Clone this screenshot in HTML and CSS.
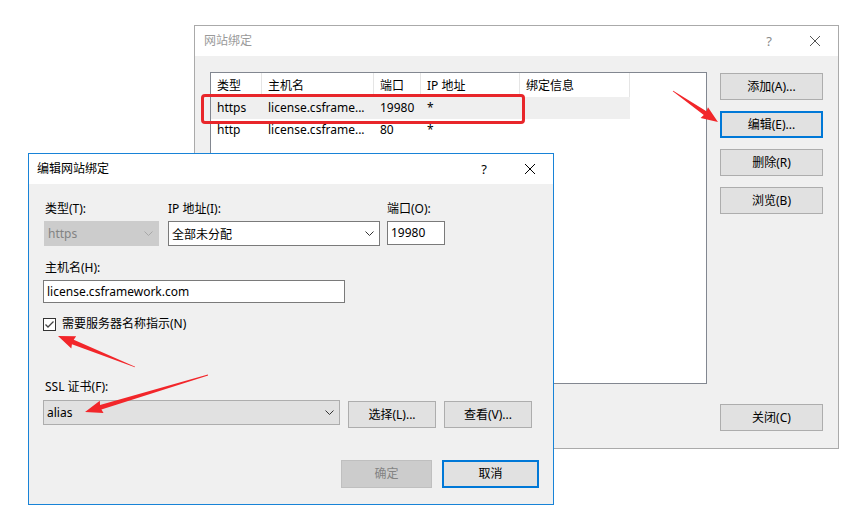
FILE: index.html
```html
<!DOCTYPE html>
<html>
<head>
<meta charset="utf-8">
<link rel="stylesheet" href="styles.css">
</head>
<body>
<div class="win win-back">
  <div class="titlebar">
    <div class="title">网站绑定</div>
    <div class="tbtn q">?</div>
    <div class="tbtn"><svg width="12" height="12" viewBox="0 0 12 12"><path d="M1 1 L11 11 M11 1 L1 11" stroke="#555" stroke-width="1" fill="none"/></svg></div>
  </div>
  <div class="back-body">
    <div class="list">
      <div class="lrow lhead">
        <div class="cell">类型</div>
        <div class="cell">主机名</div>
        <div class="cell">端口</div>
        <div class="cell">IP 地址</div>
        <div class="cell">绑定信息</div>
      </div>
      <div class="lrow sel">
        <div class="cell">https</div>
        <div class="cell">license.csframe...</div>
        <div class="cell">19980</div>
        <div class="cell">*</div>
        <div class="cell"></div>
      </div>
      <div class="lrow">
        <div class="cell">http</div>
        <div class="cell">license.csframe...</div>
        <div class="cell">80</div>
        <div class="cell">*</div>
        <div class="cell"></div>
      </div>
    </div>
    <div class="side">
      <div class="btn side-btn">添加(A)...</div>
      <div class="btn side-btn focus">编辑(E)...</div>
      <div class="btn side-btn">删除(R)</div>
      <div class="btn side-btn">浏览(B)</div>
      <div class="btn side-btn close-btn">关闭(C)</div>
    </div>
  </div>
</div>

<div class="hl"></div>

<div class="win win-front">
  <div class="titlebar">
    <div class="title">编辑网站绑定</div>
    <div class="tbtn q qa">?</div>
    <div class="tbtn"><svg width="12" height="12" viewBox="0 0 12 12"><path d="M1 1 L11 11 M11 1 L1 11" stroke="#000" stroke-width="1" fill="none"/></svg></div>
  </div>
  <div class="front-body">
    <div class="row1">
      <div class="field f-type">
        <div class="lbl">类型(T):</div>
        <div class="combo disabled"><span class="ctext">https</span><span class="chev"><svg width="9" height="5" viewBox="0 0 9 5"><polyline points="0.5,0.5 4.5,4.5 8.5,0.5" fill="none" stroke="#a8a8a8" stroke-width="1"/></svg></span></div>
      </div>
      <div class="field f-ip">
        <div class="lbl">IP 地址(I):</div>
        <div class="combo white"><span class="ctext">全部未分配</span><span class="chev"><svg width="9" height="5" viewBox="0 0 9 5"><polyline points="0.5,0.5 4.5,4.5 8.5,0.5" fill="none" stroke="#333" stroke-width="1"/></svg></span></div>
      </div>
      <div class="field f-port">
        <div class="lbl">端口(O):</div>
        <div class="tinput port">19980</div>
      </div>
    </div>
    <div class="lbl host-lbl">主机名(H):</div>
    <div class="tinput host">license.csframework.com</div>
    <div class="chkrow">
      <span class="chk"><svg width="11" height="11" viewBox="0 0 11 11"><polyline points="1.5,5.5 4,8 9.5,2.5" fill="none" stroke="#444" stroke-width="1.3"/></svg></span>
      <span class="chklbl">需要服务器名称指示(N)</span>
    </div>
    <div class="lbl ssl-lbl">SSL 证书(F):</div>
    <div class="sslrow">
      <div class="combo gray ssl"><span class="ctext">alias</span><span class="chev"><svg width="9" height="5" viewBox="0 0 9 5"><polyline points="0.5,0.5 4.5,4.5 8.5,0.5" fill="none" stroke="#333" stroke-width="1"/></svg></span></div>
      <div class="btn sbtn">选择(L)...</div>
      <div class="btn sbtn">查看(V)...</div>
    </div>
    <div class="footer">
      <div class="btn fbtn disabled-btn">确定</div>
      <div class="btn fbtn focus cancel">取消</div>
    </div>
  </div>
</div>

<svg class="arrows" width="863" height="514" viewBox="0 0 863 514">
  <g fill="#f2262a">
    <polygon transform="translate(673,91) rotate(34.6)" points="0,-0.4 39,-2.3 38,-6.5 54.6,0 38,6.5 39,2.3 0,0.4"/>
    <polygon transform="translate(135,367) rotate(201.9)" points="0,-0.4 67,-2.4 66,-6.5 83,0 66,6.5 67,2.4 0,0.4"/>
    <polygon transform="translate(208,375) rotate(163.3)" points="0,-0.4 112,-2.4 111,-6.5 128.4,0 111,6.5 112,2.4 0,0.4"/>
  </g>
</svg>
</body>
</html>
```

FILE: styles.css
```css
* { box-sizing: border-box; }
html, body { margin: 0; padding: 0; }
body {
  width: 863px;
  height: 514px;
  background: #fff;
  position: relative;
  overflow: hidden;
  font-family: "Noto Sans", "Noto Sans CJK SC", sans-serif;
  font-size: 12px;
  color: #000;
}

.win {
  position: absolute;
  background: #f0f0f0;
  display: flex;
  flex-direction: column;
}
.win-back {
  left: 194px;
  top: 25px;
  width: 645px;
  height: 424px;
  border: 1px solid #aaaaaa;
}
.win-front {
  left: 28px;
  top: 153px;
  width: 526px;
  height: 352px;
  border: 1px solid #1883d7;
}

.titlebar {
  height: 30px;
  flex: none;
  background: #fff;
  display: flex;
  align-items: center;
}
.title {
  flex: 1;
  padding-left: 8px;
  line-height: 16px;
}
.win-back .title { color: #9a9a9a; padding-left: 9px; }
.tbtn {
  width: 46px;
  height: 30px;
  display: flex;
  align-items: center;
  justify-content: center;
}
.q { font-size: 13px; color: #8a8a8a; }
.qa { color: #000; }

/* back window */
.back-body {
  flex: 1;
  display: flex;
  padding: 16px 15px 17px 15px;
  gap: 13px;
}
.list {
  width: 497px;
  height: 312px;
  background: #fff;
  border: 1px solid #828790;
}
.lrow {
  display: grid;
  grid-template-columns: 51px 112px 47px 99px 110px;
  width: 419px;
  height: 22px;
  align-items: center;
}
.lhead { height: 24px; }
.lhead .cell { border-right: 1px solid #e5e5e5; height: 24px; line-height: 25px; }
.sel { background: #efefef; }
.cell {
  padding-left: 6px;
  white-space: nowrap;
  overflow: hidden;
  line-height: 22px;
}
.side {
  width: 103px;
  display: flex;
  flex-direction: column;
  gap: 11px;
  padding-top: 1px;
}
.btn {
  background: #e1e1e1;
  border: 1px solid #adadad;
  display: flex;
  align-items: center;
  justify-content: center;
  line-height: 16px;
}
.side-btn { height: 27px; }
.focus { border: 2px solid #0078d7; }
.close-btn { margin-top: auto; }

.hl {
  position: absolute;
  left: 201px;
  top: 94px;
  width: 324px;
  height: 30px;
  border: 3px solid #e8262a;
  border-radius: 4px;
}

/* front window */
.front-body {
  flex: 1;
  display: flex;
  flex-direction: column;
  padding: 17px 14px 0 15px;
}
.lbl { line-height: 16px; height: 16px; white-space: nowrap; }
.row1 { display: flex; align-items: flex-start; }
.field { display: flex; flex-direction: column; gap: 4px; }
.f-type { width: 115px; }
.f-type .lbl { padding-left: 1px; }
.f-ip { width: 212px; margin-left: 9px; }
.f-port { width: 58px; margin-left: 7px; }

.combo {
  height: 25px;
  display: flex;
  align-items: center;
  border: 1px solid #7a7a7a;
}
.combo .ctext { flex: 1; padding-left: 3px; white-space: nowrap; }
.combo .chev { width: 20px; display: flex; justify-content: center; align-items: center; }
.combo.disabled { background: #cccccc; border-color: #cccccc; color: #838383; }
.combo.white { background: #fff; }
.combo.gray { background: #e1e1e1; border-color: #adadad; }

.tinput {
  background: #fff;
  border: 1px solid #7a7a7a;
  height: 24px;
  line-height: 22px;
  padding-left: 3px;
  white-space: nowrap;
}
.host-lbl { margin-top: 14px; padding-left: 1px; }
.tinput.host { width: 302px; height: 23px; line-height: 21px; margin-top: 4px; margin-left: -1px; padding-left: 3px; }

.chkrow {
  display: flex;
  align-items: center;
  margin-top: 14px;
  margin-left: -1px;
  height: 14px;
}
.chk {
  width: 13px;
  height: 13px;
  border: 1px solid #333;
  background: #fff;
  display: flex;
  align-items: center;
  justify-content: center;
}
.chklbl { margin-left: 6px; line-height: 16px; }

.ssl-lbl { margin-top: 48px; padding-left: 1px; }
.sslrow { display: flex; align-items: flex-start; margin-top: 5px; margin-left: -1px; }
.combo.ssl { width: 297px; }
.sbtn { height: 27px; width: 88px; margin-left: 8px; margin-top: 1px; }

.footer {
  display: flex;
  justify-content: flex-end;
  gap: 10px;
  margin-top: 32px;
}
.fbtn { height: 28px; }
.disabled-btn { width: 91px; background: #cccccc; border-color: #bfbfbf; color: #838383; }
.cancel { width: 97px; }

.arrows {
  position: absolute;
  left: 0;
  top: 0;
  pointer-events: none;
}
```
